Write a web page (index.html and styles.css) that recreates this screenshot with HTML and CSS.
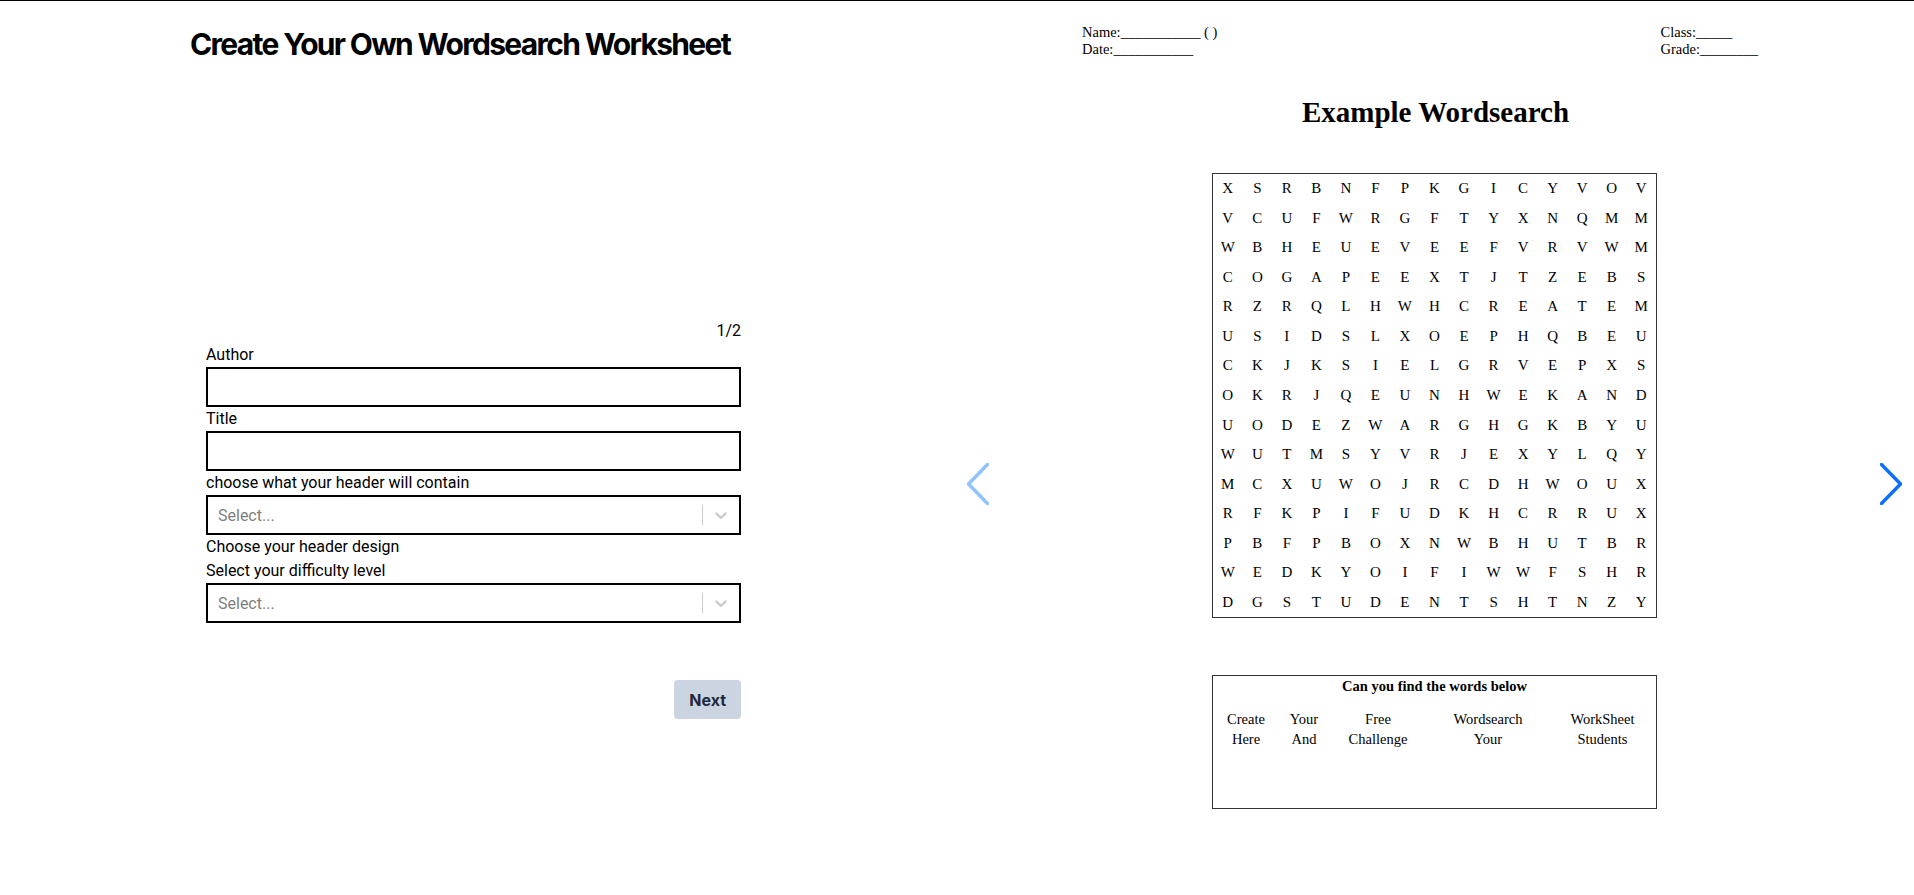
FILE: index.html
```html
<!DOCTYPE html>
<html lang="en">
<head>
<meta charset="utf-8">
<title>Create Your Own Wordsearch Worksheet</title>
<link rel="stylesheet" href="styles.css">
</head>
<body>
<div class="page">
  <section class="builder">
    <h1 class="builder-title">Create Your Own Wordsearch Worksheet</h1>
    <form class="form">
      <div class="step">1/2</div>
      <label class="field-label">Author</label>
      <input class="text-input" type="text">
      <label class="field-label">Title</label>
      <input class="text-input" type="text">
      <label class="field-label">choose what your header will contain</label>
      <div class="select">
        <div class="select-value">Select...</div>
        <span class="select-sep"></span>
        <span class="select-arrow"><svg viewBox="0 0 20 20"><path d="M4.516 7.548c0.436-0.446 1.043-0.481 1.576 0l3.908 3.747 3.908-3.747c0.533-0.481 1.141-0.446 1.574 0 0.436 0.445 0.408 1.197 0 1.615-0.406 0.418-4.695 4.502-4.695 4.502-0.217 0.223-0.502 0.335-0.787 0.335s-0.57-0.112-0.789-0.335c0 0-4.287-4.084-4.695-4.502s-0.436-1.170 0-1.615z"/></svg></span>
      </div>
      <label class="field-label">Choose your header design</label>
      <label class="field-label">Select your difficulty level</label>
      <div class="select">
        <div class="select-value">Select...</div>
        <span class="select-sep"></span>
        <span class="select-arrow"><svg viewBox="0 0 20 20"><path d="M4.516 7.548c0.436-0.446 1.043-0.481 1.576 0l3.908 3.747 3.908-3.747c0.533-0.481 1.141-0.446 1.574 0 0.436 0.445 0.408 1.197 0 1.615-0.406 0.418-4.695 4.502-4.695 4.502-0.217 0.223-0.502 0.335-0.787 0.335s-0.57-0.112-0.789-0.335c0 0-4.287-4.084-4.695-4.502s-0.436-1.170 0-1.615z"/></svg></span>
      </div>
      <div class="actions"><button type="button" class="next-btn">Next</button></div>
    </form>
  </section>

  <section class="preview">
    <button type="button" class="nav nav-prev" aria-label="Previous">
      <svg viewBox="0 0 22 42"><polyline points="20.5,1.5 1.5,21 20.5,40.5"/></svg>
    </button>
    <div class="sheet">
      <div class="sheet-header">
        <div>Name:___________ ( )<br>Date:___________</div>
        <div>Class:_____<br>Grade:________</div>
      </div>
      <h2 class="sheet-title">Example Wordsearch</h2>
      <div class="grid">
        <span>X</span><span>S</span><span>R</span><span>B</span><span>N</span><span>F</span><span>P</span><span>K</span><span>G</span><span>I</span><span>C</span><span>Y</span><span>V</span><span>O</span><span>V</span>
        <span>V</span><span>C</span><span>U</span><span>F</span><span>W</span><span>R</span><span>G</span><span>F</span><span>T</span><span>Y</span><span>X</span><span>N</span><span>Q</span><span>M</span><span>M</span>
        <span>W</span><span>B</span><span>H</span><span>E</span><span>U</span><span>E</span><span>V</span><span>E</span><span>E</span><span>F</span><span>V</span><span>R</span><span>V</span><span>W</span><span>M</span>
        <span>C</span><span>O</span><span>G</span><span>A</span><span>P</span><span>E</span><span>E</span><span>X</span><span>T</span><span>J</span><span>T</span><span>Z</span><span>E</span><span>B</span><span>S</span>
        <span>R</span><span>Z</span><span>R</span><span>Q</span><span>L</span><span>H</span><span>W</span><span>H</span><span>C</span><span>R</span><span>E</span><span>A</span><span>T</span><span>E</span><span>M</span>
        <span>U</span><span>S</span><span>I</span><span>D</span><span>S</span><span>L</span><span>X</span><span>O</span><span>E</span><span>P</span><span>H</span><span>Q</span><span>B</span><span>E</span><span>U</span>
        <span>C</span><span>K</span><span>J</span><span>K</span><span>S</span><span>I</span><span>E</span><span>L</span><span>G</span><span>R</span><span>V</span><span>E</span><span>P</span><span>X</span><span>S</span>
        <span>O</span><span>K</span><span>R</span><span>J</span><span>Q</span><span>E</span><span>U</span><span>N</span><span>H</span><span>W</span><span>E</span><span>K</span><span>A</span><span>N</span><span>D</span>
        <span>U</span><span>O</span><span>D</span><span>E</span><span>Z</span><span>W</span><span>A</span><span>R</span><span>G</span><span>H</span><span>G</span><span>K</span><span>B</span><span>Y</span><span>U</span>
        <span>W</span><span>U</span><span>T</span><span>M</span><span>S</span><span>Y</span><span>V</span><span>R</span><span>J</span><span>E</span><span>X</span><span>Y</span><span>L</span><span>Q</span><span>Y</span>
        <span>M</span><span>C</span><span>X</span><span>U</span><span>W</span><span>O</span><span>J</span><span>R</span><span>C</span><span>D</span><span>H</span><span>W</span><span>O</span><span>U</span><span>X</span>
        <span>R</span><span>F</span><span>K</span><span>P</span><span>I</span><span>F</span><span>U</span><span>D</span><span>K</span><span>H</span><span>C</span><span>R</span><span>R</span><span>U</span><span>X</span>
        <span>P</span><span>B</span><span>F</span><span>P</span><span>B</span><span>O</span><span>X</span><span>N</span><span>W</span><span>B</span><span>H</span><span>U</span><span>T</span><span>B</span><span>R</span>
        <span>W</span><span>E</span><span>D</span><span>K</span><span>Y</span><span>O</span><span>I</span><span>F</span><span>I</span><span>W</span><span>W</span><span>F</span><span>S</span><span>H</span><span>R</span>
        <span>D</span><span>G</span><span>S</span><span>T</span><span>U</span><span>D</span><span>E</span><span>N</span><span>T</span><span>S</span><span>H</span><span>T</span><span>N</span><span>Z</span><span>Y</span>
      </div>
      <div class="words">
        <div class="words-title">Can you find the words below</div>
        <div class="words-cols">
          <div>Create<br>Here</div>
          <div>Your<br>And</div>
          <div>Free<br>Challenge</div>
          <div>Wordsearch<br>Your</div>
          <div>WorkSheet<br>Students</div>
        </div>
      </div>
    </div>
    <button type="button" class="nav nav-next" aria-label="Next">
      <svg viewBox="0 0 22 42"><polyline points="1.5,1.5 20.5,21 1.5,40.5"/></svg>
    </button>
  </section>
</div>
</body>
</html>
```
FILE: styles.css
```css
* { box-sizing: border-box; }

html, body {
  margin: 0;
  padding: 0;
  background: #fff;
}

body {
  border-top: 1px solid #000;
  font-family: Roboto, "Liberation Sans", sans-serif;
  color: #000;
}

.page {
  display: grid;
  grid-template-columns: 957px 957px;
  min-height: 894px;
}

/* ---------- left: builder ---------- */
.builder {
  padding: 25px 0 0 190px;
}

.builder-title {
  margin: 0;
  font-family: Inter, "Liberation Sans", sans-serif;
  font-weight: 700;
  font-size: 30px;
  line-height: 36px;
  letter-spacing: -0.056em;
  color: #000;
}

.form {
  width: 535px;
  margin: 257px 0 0 16px;
}

.step {
  text-align: right;
  font-size: 16px;
  line-height: 24px;
}

.field-label {
  display: block;
  font-size: 16px;
  line-height: 24px;
}

.text-input {
  display: block;
  width: 100%;
  height: 40px;
  margin: 0;
  padding: 0 10px;
  border: 2px solid #000;
  font: inherit;
  background: #fff;
}

.select {
  display: flex;
  align-items: center;
  height: 40px;
  border: 2px solid #000;
  background: #fff;
}

.select-value {
  flex: 1;
  padding-left: 10px;
  color: #808080;
  font-size: 16px;
}

.select-sep {
  width: 1px;
  height: 20px;
  background: #ccc;
}

.select-arrow {
  display: flex;
  padding: 8px;
}

.select-arrow svg {
  width: 20px;
  height: 20px;
  fill: #ccc;
}

.actions {
  display: flex;
  justify-content: flex-end;
  margin-top: 57px;
}

.next-btn {
  height: 39px;
  padding: 0 15px;
  border: 0;
  border-radius: 4px;
  background: #cbd5e1;
  font-family: Inter, "Liberation Sans", sans-serif;
  font-weight: 700;
  font-size: 16px;
  color: #1e293b;
}

/* ---------- right: preview ---------- */
.preview {
  position: relative;
  font-family: "Liberation Serif", "Times New Roman", serif;
  color: #000;
}

.sheet {
  display: flex;
  flex-direction: column;
  align-items: center;
  padding-top: 23px;
}

.sheet-header {
  align-self: flex-start;
  margin-left: 125px;
  width: 676px;
  display: flex;
  justify-content: space-between;
  font-size: 14.5px;
}

.sheet-title {
  margin: 38px 0 44px;
  font-size: 29px;
  font-weight: 700;
  line-height: normal;
}

.grid {
  width: 445px;
  height: 445px;
  margin-right: 2px;
  border: 1px solid #333;
  display: grid;
  grid-template-columns: repeat(15, 1fr);
  grid-template-rows: repeat(15, 1fr);
  font-size: 15px;
}

.grid span {
  display: flex;
  align-items: center;
  justify-content: center;
}

.words {
  width: 445px;
  height: 134px;
  margin: 57px 2px 0 0;
  border: 1px solid #333;
  font-size: 14.5px;
  line-height: 20px;
  text-align: center;
}

.words-title {
  font-weight: 700;
}

.words-cols {
  display: grid;
  grid-template-columns: 66px 50px 98px 122px 107px;
  margin-top: 13px;
}

.nav {
  position: absolute;
  top: 462px;
  width: 22px;
  height: 42px;
  padding: 0;
  border: 0;
  background: none;
}

.nav svg {
  display: block;
  width: 22px;
  height: 42px;
  fill: none;
  stroke-width: 3.4;
  stroke-linecap: round;
  stroke-linejoin: round;
}

.nav-prev { left: 10px; }
.nav-prev svg { stroke: #8ec3fd; }

.nav-next { left: 923px; }
.nav-next svg { stroke: #0d6efd; }
```
